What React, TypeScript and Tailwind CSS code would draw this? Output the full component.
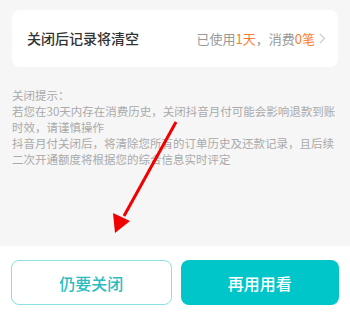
export default function App() {
  return (
    <div className="relative w-[350px] h-[332px] bg-white overflow-hidden font-['Noto_Sans_CJK_SC',sans-serif]">
      <div className="bg-[#f6f6f6] h-[246px] px-3 pt-[10px]">
        <div className="bg-white rounded-[8px] h-[57px] flex items-center justify-between pl-[15px] pr-[12px]">
          <span className="text-[14px] text-[#333] font-medium">关闭后记录将清空</span>
          <span className="flex items-center text-[13px] text-[#999]">
            已使用<span className="text-[#ff7c2e]">1天</span>，消费<span className="text-[#ff7c2e]">0笔</span>
            <svg className="ml-1" width="7" height="11" viewBox="0 0 7 11">
              <path d="M1 1l4.5 4.5L1 10" fill="none" stroke="#ccc" strokeWidth="1.2" />
            </svg>
          </span>
        </div>
        <div className="mt-[20px] text-[11.5px] leading-[16px] text-[#aaa]">
          <p>关闭提示：</p>
          <p>若您在30天内存在消费历史，关闭抖音月付可能会影响退款到账时效，请谨慎操作</p>
          <p>抖音月付关闭后，将清除您所有的订单历史及还款记录，且后续二次开通额度将根据您的综合信息实时评定</p>
        </div>
      </div>
      <div className="flex gap-[9px] px-[11px] pt-[14px]">
        <button className="flex-1 h-[45px] rounded-[8px] border border-[#8be0e2] text-[#2bbcc2] text-[16px] font-medium">仍要关闭</button>
        <button className="flex-1 h-[45px] rounded-[8px] bg-[#00c6ca] text-white text-[16px] font-medium">再用用看</button>
      </div>
      <svg className="absolute left-0 top-0 pointer-events-none" width="350" height="332">
        <line x1="176" y1="122" x2="124" y2="216" stroke="#f00000" strokeWidth="3" />
        <polygon points="115,233 113,213 130,221" fill="#f00000" />
      </svg>
    </div>
  )
}
